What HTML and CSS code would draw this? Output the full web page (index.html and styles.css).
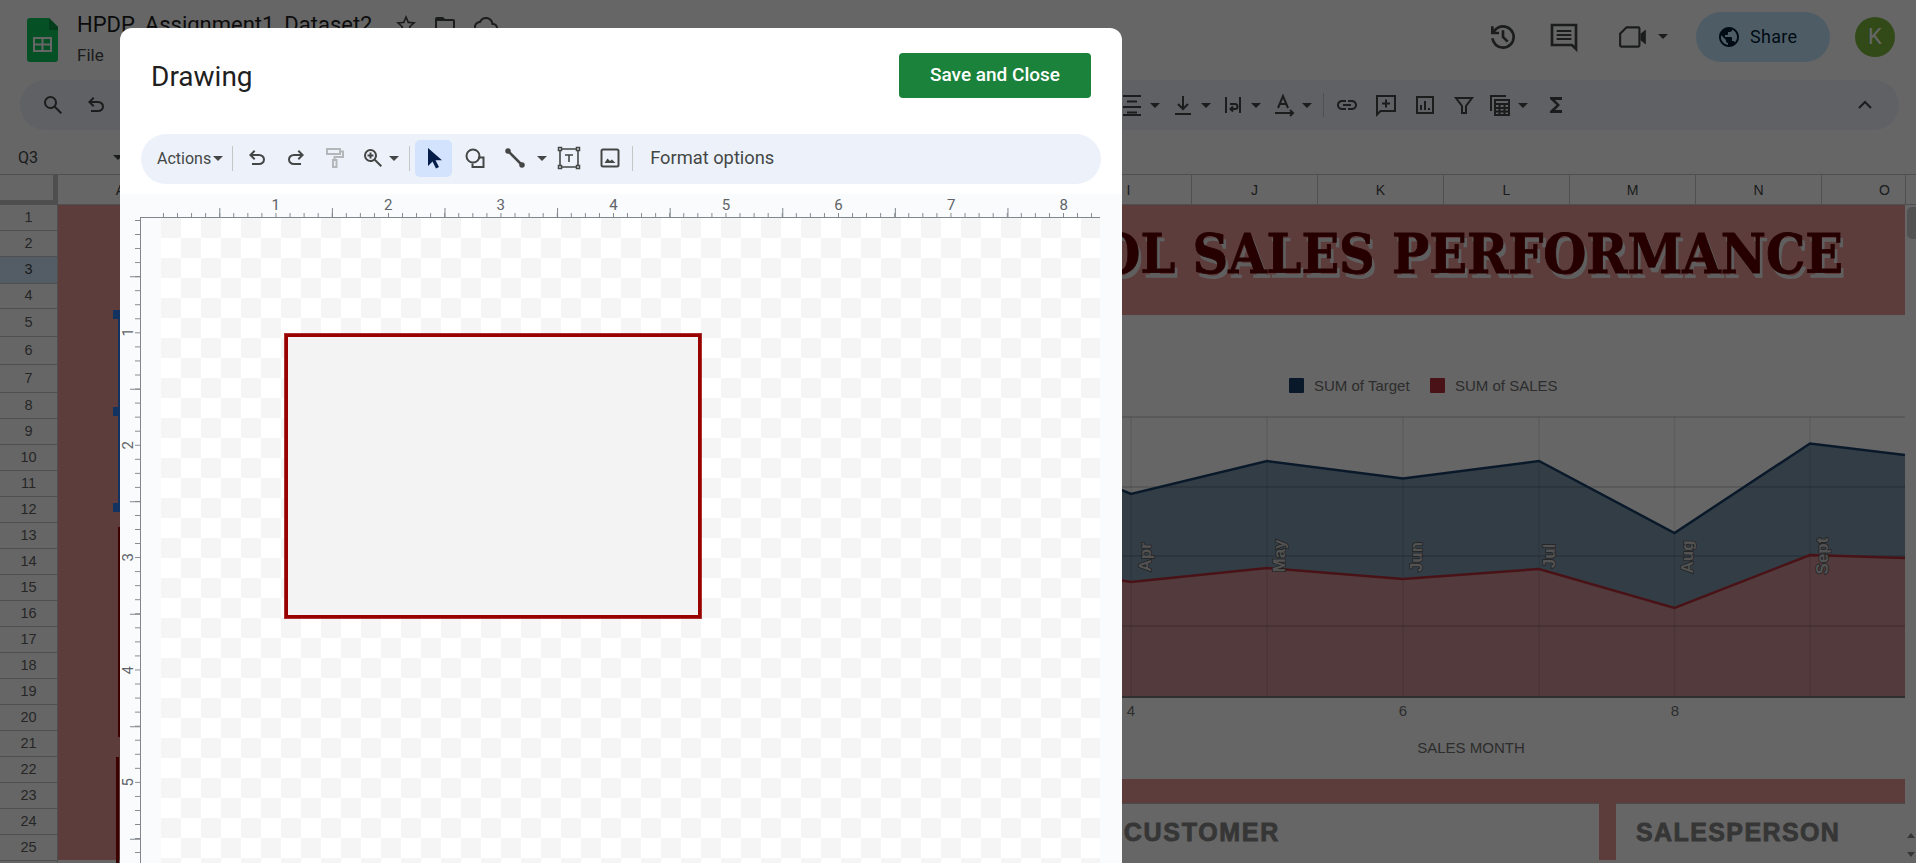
FILE: index.html
```html
<!DOCTYPE html>
<html lang="en">
  <head>
    <meta charset="UTF-8" />
    <title>HPDP_Assignment1_Dataset2</title>
    <link rel="stylesheet" href="styles.css">
  </head>
  <body>
    <div class="app">
      <header class="topbar">
        <svg class="logo" viewBox="0 0 31 44">
          <path class="logo-page" d="M3 0h19l9 9v32a3 3 0 0 1-3 3H3a3 3 0 0 1-3-3V3a3 3 0 0 1 3-3z"/>
          <path class="logo-fold" d="M22 0l9 9v3h-9z"/>
          <path class="logo-grid" d="M6 19h19v15H6zm2 2v4.5h6.5V21zm8.5 0v4.5H23V21zM8 27.500V32h6.500v-4.500zm8.500 0V32H23v-4.500z"/>
        </svg>
        <div class="docname">
          <div class="doctitle">HPDP_Assignment1_Dataset2</div>
          <div class="menu">File</div>
        </div>
        <svg class="ic star" viewBox="0 0 24 24"><path d="M22 9.240l-7.190-.62L12 2 9.190 8.630 2 9.240l5.460 4.730L5.820 21 12 17.270 18.180 21l-1.630-7.030L22 9.240zM12 15.400l-3.760 2.270 1-4.280-3.320-2.880 4.380-.38L12 6.100l1.710 4.040 4.380.38-3.320 2.880 1 4.280L12 15.400z"/></svg>
        <svg class="ic folder" viewBox="0 0 24 24"><path d="M4 4h6l2 2h8a2 2 0 0 1 2 2v10a2 2 0 0 1-2 2H4a2 2 0 0 1-2-2V6a2 2 0 0 1 2-2zm0 4v10h16V8z"/></svg>
        <svg class="ic cloud" viewBox="0 0 24 24"><path d="M19.350 10.040C18.670 6.590 15.640 4 12 4 9.110 4 6.600 5.640 5.350 8.040 2.340 8.360 0 10.910 0 14c0 3.310 2.690 6 6 6h13c2.760 0 5-2.240 5-5 0-2.640-2.050-4.780-4.650-4.960zM19 18H6c-2.210 0-4-1.790-4-4 0-2.050 1.530-3.760 3.560-3.970l1.070-.11.5-.95C8.080 7.140 9.940 6 12 6c2.620 0 4.880 1.860 5.390 4.430l.3 1.500 1.530.11c1.560.1 2.780 1.410 2.780 2.960 0 1.650-1.350 3-3 3z"/></svg>

        <div class="topright">
          <svg class="ic big" viewBox="0 -960 960 960"><path d="M480-120q-138 0-240.500-91.500T122-440h82q14 104 92.500 172T480-200q117 0 198.500-81.500T760-480q0-117-81.500-198.500T480-760q-69 0-129 32t-101 88h110v80H120v-240h80v94q51-64 124.500-99T480-840q75 0 140.500 28.500t114 77q48.500 48.500 77 114T840-480q0 75-28.500 140.500t-77 114q-48.500 48.500-114 77T480-120Zm112-192L440-464v-216h80v184l128 128-56 56Z"/></svg>
          <svg class="st big comment-top" viewBox="0 0 24 24"><path d="M3 3h18v18l-3-3H3z"/><path class="thin" d="M6.500 7.500h11M6.500 10.500h11M6.500 13.500h11"/></svg>
          <svg class="meet" viewBox="0 0 28 24">
            <path class="st" d="M8 3h11a1 1 0 0 1 1 1v16a1 1 0 0 1-1 1H3a1 1 0 0 1-1-1V9z"/>
            <path class="solid" d="M21 9l5-4v14l-5-4z"/>
          </svg>
          <span class="caret meet-caret"></span>
          <div class="share">
            <svg class="globe" viewBox="0 0 24 24"><path d="M12 2C6.480 2 2 6.480 2 12s4.480 10 10 10 10-4.480 10-10S17.520 2 12 2zm-1 17.930c-3.950-.49-7-3.850-7-7.930 0-.62.08-1.210.21-1.790L9 15v1c0 1.100.9 2 2 2v1.930zm6.900-2.540c-.26-.81-1-1.390-1.900-1.390h-1v-3c0-.55-.45-1-1-1H8v-2h2c.55 0 1-.45 1-1V7h2c1.100 0 2-.9 2-2v-.41c2.930 1.190 5 4.060 5 7.410 0 2.080-.8 3.970-2.100 5.390z"/></svg>
            <span>Share</span>
          </div>
          <div class="avatar">K</div>
        </div>
      </header>

      <div class="sheetbar">
        <svg class="ic tb-search" viewBox="0 -960 960 960"><path d="M784-120 532-372q-30 24-69 38t-83 14q-109 0-184.500-75.500T120-580q0-109 75.500-184.500T380-840q109 0 184.500 75.500T640-580q0 44-14 83t-38 69l252 252-56 56ZM380-400q75 0 127.500-52.500T560-580q0-75-52.500-127.500T380-760q-75 0-127.500 52.500T200-580q0 75 52.500 127.500T380-400Z"/></svg>
        <svg class="ic tb-undo" viewBox="0 -960 960 960"><path d="M280-200v-80h284q63 0 109.500-40T720-420q0-60-46.500-100T564-560H312l104 104-56 56-200-200 200-200 56 56-104 104h252q97 0 166.500 63T800-420q0 94-69.500 157T564-200H280Z"/></svg>

        <svg class="st tb-align" viewBox="0 0 24 24"><path d="M3 3h18M7 8.500h10M3 14h18M7 19.500h10M3 22h18"/></svg>
        <span class="caret"></span>
        <svg class="st tb-icon ml11" viewBox="0 0 24 24"><path d="M12 3v13M7 11l5 5 5-5M4 21h16"/></svg>
        <span class="caret"></span>
        <svg class="st tb-icon ml10" viewBox="0 0 24 24"><path d="M5 4v16M19 4v16M9 11h5a2.500 2.500 0 0 1 0 5H10M12 13.500L9.500 16l2.500 2.500"/></svg>
        <span class="caret"></span>
        <svg class="st tb-icon ml11" viewBox="0 0 24 24"><path d="M6 15l5-12 5 12M7.500 11h7M3 20h17M18 17l3 3-3 3"/></svg>
        <span class="caret"></span>
        <span class="tb-sep"></span>
        <svg class="ic tb-icon ml11" viewBox="0 0 24 24"><path d="M3.900 12c0-1.710 1.390-3.100 3.100-3.100h4V7H7c-2.760 0-5 2.240-5 5s2.240 5 5 5h4v-1.900H7c-1.710 0-3.100-1.390-3.100-3.100zM8 13h8v-2H8v2zm9-6h-4v1.900h4c1.710 0 3.100 1.390 3.100 3.100s-1.390 3.100-3.100 3.100h-4V17h4c2.760 0 5-2.240 5-5s-2.240-5-5-5z"/></svg>
        <svg class="st tb-icon" viewBox="0 0 24 24"><path d="M3 3h18v15H6.500L3 21.500zM12 6.500v8M8 10.500h8"/></svg>
        <svg class="st tb-icon" viewBox="0 0 24 24"><path d="M4 4h16v16H4zM8 12v5M12 8v9M16 15v2"/></svg>
        <svg class="st tb-icon" viewBox="0 0 24 24"><path d="M4 5h16l-6 8v7h-4v-7z"/></svg>
        <svg class="st tb-icon ml12" viewBox="0 0 24 24"><path d="M3 18V3h15M7 7h14v15H7zM7 11h14M7 15h14M7 18.500h14M11.500 11v11M16.500 11v11"/></svg>
        <span class="caret"></span>
        <svg class="ic tb-icon ml16" viewBox="0 0 24 24"><path d="M18 4H6v2l6.500 6L6 18v2h12v-3h-7l5-5-5-5h7z"/></svg>
        <svg class="st tb-chevron" viewBox="0 0 24 24"><path d="M6 15l6-6 6 6"/></svg>
      </div>

      <div class="namebox">
        <span class="cellref">Q3</span>
        <span class="caret"></span>
      </div>

      <div class="colheads">
        <div class="corner"></div>
        <div class="cols">
          <div class="col">A</div><div class="col">B</div><div class="col">C</div><div class="col">D</div><div class="col">E</div>
          <div class="col">F</div><div class="col">G</div><div class="col">H</div><div class="col">I</div><div class="col">J</div>
          <div class="col">K</div><div class="col">L</div><div class="col">M</div><div class="col">N</div><div class="col">O</div>
        </div>
        <div class="scroll-head"></div>
      </div>

      <div class="grid">
        <div class="rows">
          <div class="row">1</div><div class="row">2</div><div class="row">3</div><div class="row">4</div><div class="row">5</div>
          <div class="row">6</div><div class="row">7</div><div class="row">8</div><div class="row">9</div><div class="row">10</div>
          <div class="row">11</div><div class="row">12</div><div class="row">13</div><div class="row">14</div><div class="row">15</div>
          <div class="row">16</div><div class="row">17</div><div class="row">18</div><div class="row">19</div><div class="row">20</div>
          <div class="row">21</div><div class="row">22</div><div class="row">23</div><div class="row">24</div><div class="row">25</div>
        </div>

        <div class="sheet">
          <div class="handle h1"></div>
          <div class="handle h2"></div>
          <div class="handle h3"></div>
          <div class="edge edge-blue"></div>
          <div class="edge edge-red1"></div>
          <div class="edge edge-red2"></div>

          <div class="banner"><h1>OL SALES PERFORMANCE</h1></div>

          <div class="chart">
            <svg viewBox="120 315 1785 464">
              <rect class="key-target" x="1289" y="378" width="15" height="15" rx="1"/>
              <text class="chart-text" x="1314" y="391">SUM of Target</text>
              <rect class="key-sales" x="1430" y="378" width="15" height="15" rx="1"/>
              <text class="chart-text" x="1455" y="391">SUM of SALES</text>

              <path class="area-target" d="M1000 440L1131 494L1267 461L1403 478.500L1539 461L1674.500 533L1810 443.500L1905 455V697H1000Z"/>
              <path class="area-sales" d="M1000 560L1131 582L1267 568L1403 579L1539 569L1674.500 608L1810 555L1905 558V697H1000Z"/>

              <path class="gridline" d="M1000 417H1905M1000 487H1905M1000 556H1905M1000 626H1905"/>
              <path class="gridline-v" d="M1131 417V697M1267 417V697M1403 417V697M1539 417V697M1674.500 417V697M1810 417V697"/>
              <path class="line-target" d="M1000 440L1131 494L1267 461L1403 478.500L1539 461L1674.500 533L1810 443.500L1905 455"/>
              <path class="line-sales" d="M1000 560L1131 582L1267 568L1403 579L1539 569L1674.500 608L1810 555L1905 558"/>
              <path class="axis" d="M1000 697H1905"/>

              <text class="month" transform="translate(1151 557) rotate(-90)">Apr</text>
              <text class="month" transform="translate(1285 556) rotate(-90)">May</text>
              <text class="month" transform="translate(1422 557) rotate(-90)">Jun</text>
              <text class="month" transform="translate(1555 556) rotate(-90)">Jul</text>
              <text class="month" transform="translate(1693 557) rotate(-90)">Aug</text>
              <text class="month" transform="translate(1828 556) rotate(-90)">Sept</text>

              <text class="chart-text mid" x="1131" y="716">4</text>
              <text class="chart-text mid" x="1403" y="716">6</text>
              <text class="chart-text mid" x="1675" y="716">8</text>
              <text class="chart-text mid" x="1471" y="753">SALES MONTH</text>
            </svg>
          </div>

          <div class="band"></div>

          <div class="cards">
            <div class="card card-customer">CUSTOMER</div>
            <div class="card card-sales">SALESPERSON</div>
          </div>
          <div class="sheet-foot"></div>
        </div>

        <div class="scrollbar">
          <div class="thumb"></div>
          <div class="arrows">
            <span class="arrow-up"></span>
            <span class="arrow-down"></span>
          </div>
        </div>
      </div>
    </div>

    <div class="scrim"></div>

    <div class="dialog">
      <div class="dialog-head">
        <div class="dialog-title">Drawing</div>
        <button class="save">Save and Close</button>
      </div>

      <div class="drawbar">
        <span class="actions">Actions</span>
        <span class="caret small"></span>
        <span class="bar-sep sep1"></span>
        <svg class="ic tool first" viewBox="0 -960 960 960"><path d="M280-200v-80h284q63 0 109.500-40T720-420q0-60-46.500-100T564-560H312l104 104-56 56-200-200 200-200 56 56-104 104h252q97 0 166.500 63T800-420q0 94-69.500 157T564-200H280Z"/></svg>
        <svg class="ic tool" viewBox="0 -960 960 960"><path d="M396-200q-97 0-166.500-63T160-420q0-94 69.500-157T396-640h252L544-744l56-56 200 200-200 200-56-56 104-104H396q-63 0-109.500 40T240-420q0 60 46.500 100T396-280h284v80H396Z"/></svg>
        <svg class="tool roller" viewBox="0 0 24 24"><path d="M4 3h13v5H4zM17 5.500h3v5.500h-8.500v3M10 14h3.500v7H10z"/></svg>
        <svg class="ic tool zoom" viewBox="0 -960 960 960"><path d="M784-120 532-372q-30 24-69 38t-83 14q-109 0-184.500-75.500T120-580q0-109 75.500-184.500T380-840q109 0 184.500 75.500T640-580q0 44-14 83t-38 69l252 252-56 56ZM380-400q75 0 127.500-52.500T560-580q0-75-52.500-127.500T380-760q-75 0-127.500 52.500T200-580q0 75 52.500 127.500T380-400Zm-40-60v-80h-80v-80h80v-80h80v80h80v80h-80v80h-80Z"/></svg>
        <span class="caret zoom-caret"></span>
        <span class="bar-sep sep2"></span>
        <div class="select-btn">
          <svg class="arrow" viewBox="0 0 24 24"><path d="M6 2v18l4.500-4.500 3.500 7 3-1.500-3.500-6.800H20z"/></svg>
        </div>
        <svg class="st tool shape" viewBox="0 0 24 24"><circle cx="10" cy="10" r="6.500"/><path d="M15 11.500h5.500V21H9.500v-3.500"/></svg>
        <svg class="st tool line" viewBox="0 0 24 24"><path d="M5 5l14 14"/><circle class="dot" cx="5" cy="5" r="1.500"/><circle class="dot" cx="19" cy="19" r="1.500"/></svg>
        <span class="caret line-caret"></span>
        <svg class="st tool textbox" viewBox="0 0 24 24"><path class="thin" d="M3 3h18v18H3z"/><path class="corners" d="M1.500 1.500h3v3h-3zM19.500 1.500h3v3h-3zM1.500 19.500h3v3h-3zM19.500 19.500h3v3h-3z"/><path class="thin" d="M8 9h8M12 9v7"/></svg>
        <svg class="st tool image" viewBox="0 0 24 24"><rect x="3.500" y="3.500" width="17" height="17" rx="1.500"/><path class="solid" d="M6.500 17l3-4.500 2.500 2.500 2-1.500 3.500 3.500z"/></svg>
        <span class="bar-sep sep3"></span>
        <span class="format">Format options</span>
      </div>

      <div class="editor">
        <div class="hruler">
          <div class="hticks">
            <span class="hnum">1</span><span class="hnum">2</span><span class="hnum">3</span><span class="hnum">4</span>
            <span class="hnum">5</span><span class="hnum">6</span><span class="hnum">7</span><span class="hnum">8</span>
          </div>
        </div>
        <div class="editor-body">
          <div class="vruler">
            <span class="vnum"><span>1</span></span><span class="vnum"><span>2</span></span><span class="vnum"><span>3</span></span>
            <span class="vnum"><span>4</span></span><span class="vnum"><span>5</span></span>
          </div>
          <div class="canvas-wrap">
            <div class="canvas">
              <div class="shape-rect"></div>
            </div>
          </div>
        </div>
      </div>
    </div>
  </body>
</html>
```
FILE: styles.css
```css
* {
  box-sizing: border-box;
}
html,
body {
  margin: 0;
  height: 863px;
  overflow: hidden;
}
body {
  position: relative;
  font-family: Roboto, "Liberation Sans", sans-serif;
  color: #1f1f1f;
  background: #fff;
}

/* shared icon bits */
.ic {
  width: 24px;
  height: 24px;
  fill: #444746;
  flex: none;
}
.st {
  width: 24px;
  height: 24px;
  fill: none;
  stroke: #444746;
  stroke-width: 2;
  flex: none;
}
.st .thin,
.st.thin {
  stroke-width: 1.600;
}
.solid {
  fill: #444746;
  stroke: none;
}
.big {
  width: 32px;
  height: 32px;
}
.caret {
  flex: none;
  width: 0;
  height: 0;
  margin-left: 6px;
  border-left: 5px solid transparent;
  border-right: 5px solid transparent;
  border-top: 5px solid #444746;
}

/* top bar */
.topbar {
  height: 80px;
  display: flex;
  align-items: flex-start;
  padding-left: 27px;
}
.logo {
  width: 31px;
  height: 44px;
  margin-top: 18px;
  flex: none;
}
.logo-page {
  fill: #0fc75e;
}
.logo-fold {
  fill: #089a46;
}
.logo-grid {
  fill: #fff;
  fill-rule: evenodd;
}
.docname {
  margin-left: 19px;
  padding-top: 12px;
  width: 296px;
}
.doctitle {
  font-size: 22px;
  line-height: 26px;
  white-space: nowrap;
}
.menu {
  margin-top: 5px;
  font-size: 17px;
  line-height: 24px;
  color: #444746;
}
.star {
  margin: 13px 0 0 21px;
}
.folder {
  margin: 13px 0 0 15px;
}
.cloud {
  margin: 13px 0 0 17px;
}
.topright {
  margin-left: auto;
  margin-right: 21px;
  display: flex;
  align-items: center;
  height: 73px;
}
.comment-top {
  margin-left: 29px;
}
.meet {
  width: 30px;
  height: 26px;
  margin-left: 38px;
}
.meet .st {
  width: auto;
  height: auto;
}
.meet-caret {
  margin-left: 10px;
}
.share {
  width: 134px;
  height: 50px;
  margin-left: 28px;
  padding-left: 21px;
  border-radius: 25px;
  background: #c2e7ff;
  color: #001d35;
  display: flex;
  align-items: center;
  gap: 9px;
  font-size: 18px;
  letter-spacing: 0.3px;
}
.globe {
  width: 24px;
  height: 24px;
  fill: #001d35;
}
.avatar {
  width: 40px;
  height: 40px;
  margin-left: 25px;
  border-radius: 50%;
  background: #7cb83a;
  color: #fff;
  font-size: 22px;
  display: flex;
  align-items: center;
  justify-content: center;
}

/* sheets toolbar, most of it sits behind the dialog */
.sheetbar {
  height: 50px;
  margin: 0 17px 0 20px;
  padding-left: 21px;
  border-radius: 25px;
  background: #edf2fa;
  display: flex;
  align-items: center;
}
.tb-search {
  width: 24px;
}
.tb-undo {
  margin-left: 19px;
}
.tb-align {
  margin-left: 1012px;
}
.tb-icon {
  margin-left: 15px;
}
.ml10 {
  margin-left: 10px;
}
.ml11 {
  margin-left: 11px;
}
.ml12 {
  margin-left: 12px;
}
.ml16 {
  margin-left: 16px;
}
.tb-sep {
  width: 1px;
  height: 24px;
  margin-left: 11px;
  background: #c7c7c7;
}
.tb-chevron {
  margin-left: auto;
  margin-right: 22px;
}

/* name box row */
.namebox {
  height: 45px;
  padding: 10px 0 0 18px;
  display: flex;
  align-items: center;
  border-bottom: 1px solid #c4c7c5;
}
.cellref {
  font-size: 16px;
  width: 89px;
  color: #444746;
}

/* column headers */
.colheads {
  height: 30px;
  display: flex;
  border-bottom: 1px solid #c4c7c5;
}
.corner {
  width: 58px;
  flex: none;
  border-right: 5px solid #c4c4c4;
  border-bottom: 4px solid #c4c4c4;
}
.cols {
  width: 1847px;
  display: flex;
  overflow: hidden;
}
.col {
  width: 126px;
  flex: none;
  border-right: 1px solid #c4c7c5;
  font: 14px "Liberation Sans", sans-serif;
  color: #444746;
  display: flex;
  align-items: center;
  justify-content: center;
}
.scroll-head {
  flex: 1;
  border-left: 1px solid #c4c7c5;
}

/* row headers + sheet */
.grid {
  display: flex;
  height: 658px;
}
.rows {
  width: 58px;
  flex: none;
  border-right: 1px solid #c4c7c5;
}
.row {
  height: 26px;
  padding-bottom: 2px;
  border-bottom: 1px solid #c4c7c5;
  font: 14.500px "Liberation Sans", sans-serif;
  color: #5f5f5f;
  display: flex;
  align-items: center;
  justify-content: center;
}
.row:nth-child(3) {
  height: 27px;
  background: #d3e8fd;
  color: #444746;
}
.row:nth-child(4) {
  height: 25px;
}
.row:nth-child(5),
.row:nth-child(6),
.row:nth-child(7) {
  height: 28px;
}
.sheet {
  position: relative;
  width: 1847px;
  flex: none;
  background: #e89996;
  overflow: hidden;
}
.handle {
  position: absolute;
  left: 55px;
  width: 8px;
  height: 9px;
  background: #2f80f0;
}
.h1 {
  top: 105px;
}
.h2 {
  top: 202px;
}
.h3 {
  top: 298px;
}
.edge {
  position: absolute;
  left: 60px;
  width: 2px;
}
.edge-blue {
  top: 110px;
  height: 192px;
  background: #2f80f0;
}
.edge-red1 {
  top: 322px;
  height: 210px;
  background: #950000;
}
.edge-red2 {
  left: 58px;
  width: 3px;
  top: 552px;
  height: 106px;
  background: #950000;
}
.banner {
  height: 110px;
  padding: 0 62px 14px 0;
  display: flex;
  align-items: center;
  justify-content: flex-end;
}
.banner h1 {
  margin: 0;
  font: bold 55px "DejaVu Serif Condensed", "DejaVu Serif", serif;
  white-space: nowrap;
  color: #5f0000;
  -webkit-text-stroke: 0.8px #5f0000;
  text-shadow: 3px 5px 0 #eee;
}
.chart {
  height: 464px;
  margin-left: 62px;
  background: #fff;
}
.chart svg {
  display: block;
  width: 1785px;
  height: 464px;
}
.chart-text {
  font: 15px "Liberation Sans", sans-serif;
  fill: #707070;
}
.mid {
  text-anchor: middle;
}
.key-target {
  fill: #19406a;
}
.key-sales {
  fill: #b32f38;
}
.area-target {
  fill: #8099af;
}
.area-sales {
  fill: #cf9196;
}
.gridline {
  fill: none;
  stroke: rgba(0, 0, 0, 0.13);
  stroke-width: 2;
}
.gridline-v {
  fill: none;
  stroke: rgba(0, 0, 0, 0.09);
  stroke-width: 1.500;
}
.line-target {
  fill: none;
  stroke: #19406a;
  stroke-width: 2.500;
}
.line-sales {
  fill: none;
  stroke: #b32f38;
  stroke-width: 2.500;
}
.axis {
  fill: none;
  stroke: #777;
  stroke-width: 2;
}
.month {
  font: bold 17px "Liberation Sans", sans-serif;
  fill: #ccc;
  stroke: #555;
  stroke-width: 1.500;
  paint-order: stroke;
  text-anchor: middle;
}
.band {
  height: 24px;
}
.cards {
  display: flex;
  gap: 17px;
  margin-left: 62px;
  height: 57px;
}
.card {
  background: #fff;
  border-top: 1px solid #bbb;
  font: bold 25px "Liberation Sans", sans-serif;
  letter-spacing: 1.400px;
  color: #878787;
  -webkit-text-stroke: 0.8px #878787;
  display: flex;
  align-items: center;
}
.card-customer {
  width: 1479px;
  justify-content: flex-end;
  padding-right: 319px;
  letter-spacing: 1.700px;
}
.card-sales {
  flex: 1;
  padding-left: 20px;
}
.sheet-foot {
  height: 3px;
  background: #fff;
}
.scrollbar {
  flex: 1;
  position: relative;
}
.thumb {
  margin: 2px 0 0 2px;
  height: 32px;
  border-radius: 5px 0 0 5px;
  background: #ccc;
}
.arrows {
  position: absolute;
  bottom: 6px;
  left: 2px;
  display: flex;
  flex-direction: column;
  gap: 14px;
}
.arrow-up,
.arrow-down {
  width: 0;
  height: 0;
  border-left: 4px solid transparent;
  border-right: 4px solid transparent;
}
.arrow-up {
  border-bottom: 5px solid #888;
}
.arrow-down {
  border-top: 5px solid #888;
}

/* dim everything behind the dialog */
.scrim {
  position: absolute;
  inset: 0;
  background: rgba(0, 0, 0, 0.6);
}

/* dialog */
.dialog {
  position: absolute;
  left: 120px;
  top: 28px;
  width: 1002px;
  height: 835px;
  background: #fff;
  border-radius: 12px 12px 0 0;
  display: flex;
  flex-direction: column;
  overflow: hidden;
}
.dialog-head {
  height: 106px;
  padding: 25px 31px 0 31px;
  display: flex;
  justify-content: space-between;
  align-items: flex-start;
}
.dialog-title {
  font-size: 28px;
  line-height: 47px;
  color: #1f1f1f;
}
.save {
  width: 192px;
  height: 45px;
  padding: 0 0 2px;
  border: 0;
  border-radius: 4px;
  background: #1a823b;
  color: #fff;
  font: 500 19px Roboto, sans-serif;
}
.drawbar {
  height: 50px;
  margin: 0 21px 10px;
  padding: 0 0 2px 16px;
  border-radius: 25px;
  background: #edf2fa;
  display: flex;
  align-items: center;
}
.actions {
  font-size: 16px;
  color: #444746;
}
.caret.small {
  margin-left: 2px;
}
.bar-sep {
  width: 1px;
  height: 25px;
  background: #c4c7c5;
  flex: none;
}
.sep1 {
  margin-left: 9px;
}
.sep2 {
  margin-left: 10px;
}
.sep3 {
  margin-left: 10px;
}
.tool {
  margin-left: 15px;
}
.tool.first {
  margin-left: 12px;
}
.tool.zoom {
  margin-left: 14px;
}
.tool.roller {
  width: 24px;
  height: 24px;
  fill: none;
  stroke: #b4b7ba;
  stroke-width: 2;
}
.zoom-caret {
  margin-left: 4px;
}
.select-btn {
  width: 37px;
  height: 37px;
  margin-left: 5px;
  border-radius: 5px;
  background: #d3e3fd;
  display: flex;
  align-items: center;
  justify-content: center;
  flex: none;
}
.arrow {
  width: 24px;
  height: 24px;
  fill: #041e49;
}
.tool.shape {
  margin-left: 11px;
}
.tool.line {
  margin-left: 16px;
  stroke-width: 2.500;
}
.dot {
  fill: #444746;
}
.line-caret {
  margin-left: 10px;
}
.tool.textbox {
  margin-left: 10px;
}
.corners {
  fill: #edf2fa;
  stroke-width: 1.500;
}
.tool.image {
  margin-left: 17px;
}
.format {
  margin: 0 0 2px 17px;
  font-size: 18.300px;
  color: #444746;
}

/* drawing area */
.editor {
  flex: 1;
  display: flex;
  flex-direction: column;
  background: #f9fbfd;
  min-height: 0;
}
.hruler {
  height: 24px;
  margin: 0 22px 0 20px;
  padding-left: 23px;
  border-bottom: 1px solid #80868b;
  flex: none;
}
.hticks {
  height: 23px;
  padding-left: 56.300px;
  display: flex;
  background:
    linear-gradient(90deg, #80868b 1px, transparent 1px) 0 100% / 14.075px 4px repeat-x,
    linear-gradient(90deg, #80868b 1px, transparent 1px) 56.300px 100% / 112.600px 9px repeat-x;
}
.hnum {
  width: 112.600px;
  flex: none;
  text-align: center;
  font-size: 15px;
  line-height: 23px;
  color: #5f6368;
  padding-bottom: 4px;
}
.editor-body {
  flex: 1;
  display: flex;
  min-height: 0;
}
.vruler {
  width: 21px;
  flex: none;
  padding-top: 58.250px;
  border-right: 1px solid #80868b;
  background:
    linear-gradient(#80868b 1px, transparent 1px) 100% 2px / 5px 14.060px repeat-y,
    linear-gradient(#80868b 1px, transparent 1px) 100% 58.250px / 10px 112.500px repeat-y;
}
.vnum {
  height: 112.500px;
  width: 16px;
  display: flex;
  align-items: center;
  justify-content: center;
  font-size: 15px;
  color: #5f6368;
}
.vnum span {
  writing-mode: vertical-rl;
  transform: rotate(180deg);
  line-height: 16px;
}
.canvas-wrap {
  flex: 1;
  padding: 0 22px 0 20px;
  min-width: 0;
}
.canvas {
  position: relative;
  height: 100%;
  background: repeating-conic-gradient(#fff 0 25%, #f5f5f5 0 50%) 0 0 / 40px 40px;
}
.shape-rect {
  position: absolute;
  left: 124px;
  top: 116px;
  width: 416px;
  height: 284px;
  background: #f3f3f3;
  border: 3px solid #990000;
  box-shadow: 0 0 0 1px rgba(153, 0, 0, 0.8);
}
```
